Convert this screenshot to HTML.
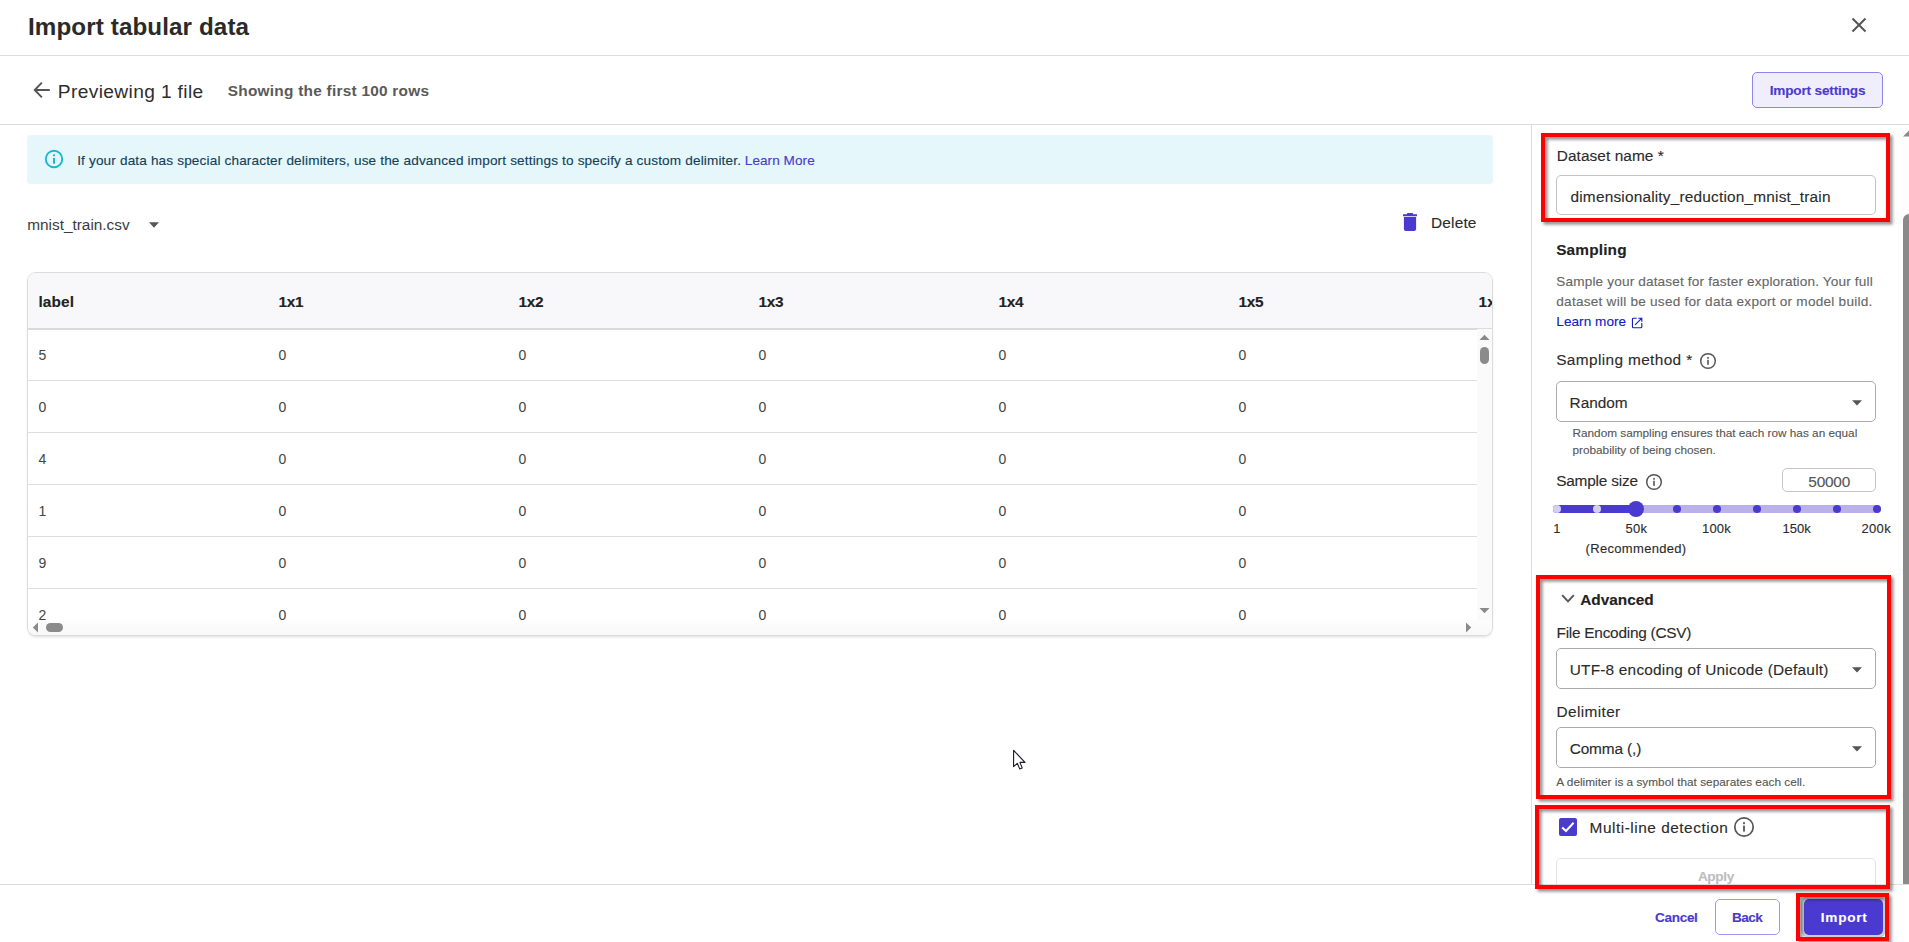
<!DOCTYPE html>
<html lang="en"><head><meta charset="utf-8"><title>Import tabular data</title>
<style>
html,body{margin:0;padding:0;background:#fff;}
body{width:1909px;height:942px;overflow:hidden;font-family:"Liberation Sans",sans-serif;}
#root{position:relative;width:1909px;height:942px;overflow:hidden;background:#fff;}
#root div,#root svg,#root span{position:absolute;box-sizing:border-box;}
.t{white-space:nowrap;line-height:20px;-webkit-text-stroke:0.12px;}
.hl{left:0;width:1909px;height:1px;background:#dcdcdc;}
.red{border:4px solid #ff0000;}
.sh{border:4px solid rgba(0,0,0,.45);filter:blur(1.5px);}
.inp{border:1px solid #c4c4c4;border-radius:5px;background:#fff;}
.sel{border-color:#ababab;}
.dot{width:8px;height:8px;border-radius:50%;background:#4a3acf;top:505px;}
.rl{left:28px;width:1449px;height:1px;background:#dedede;}

</style></head>
<body>
<div id="root">
<!-- header lines -->
<div class="hl" style="top:55px"></div>
<div class="hl" style="top:124px"></div>
<div class="hl" style="top:884px"></div>
<!-- close X -->
<svg style="left:1851px;top:17px" width="16" height="16" viewBox="0 0 16 16"><path d="M1.5 1.5 L14.5 14.5 M14.5 1.5 L1.5 14.5" stroke="#555" stroke-width="2" fill="none"/></svg>
<!-- back arrow -->
<svg style="left:33px;top:81px" width="18" height="18" viewBox="0 0 18 18"><path d="M16.8 9 H2 M8.9 1.7 L1.7 9 L8.9 16.3" stroke="#555" stroke-width="1.9" fill="none"/></svg>
<!-- Import settings button -->
<div style="left:1752px;top:72px;width:131px;height:36px;border:1px solid #8f84ea;border-radius:5px;background:#f0eefc"></div>
<!-- banner -->
<div style="left:27px;top:135px;width:1466px;height:49px;background:#e5f7fb;border-radius:4px"></div>
<svg style="left:44px;top:149px" width="20" height="20" viewBox="0 0 20 20"><circle cx="10" cy="10" r="8.2" stroke="#1ab8d3" stroke-width="1.9" fill="none"/><rect x="9" y="9" width="2" height="5.7" fill="#1ab8d3"/><rect x="9" y="5.4" width="2" height="1.8" fill="#1ab8d3"/></svg>
<!-- file dropdown caret -->
<svg style="left:149px;top:222px" width="10" height="6" viewBox="0 0 10 6"><path d="M0 0.3 H10 L5 5.8 Z" fill="#555"/></svg>
<!-- trash -->
<svg style="left:1403px;top:213px" width="14" height="18" viewBox="0 0 14 18"><path d="M0 1.2 H3.8 L4.4 0 H9.6 L10.2 1.2 H14 V3.2 H0 Z M0.9 4.1 H13.1 V16 Q13.1 18 11.1 18 H2.9 Q0.9 18 0.9 16 Z" fill="#4a3acf"/></svg>
<!-- table -->
<div style="left:27px;top:272px;width:1466px;height:364px;border:1px solid #dcdcdc;border-radius:9px;background:#fff;overflow:hidden;box-shadow:0 2px 3px -1px rgba(0,0,0,.14)">
  <div style="left:0;top:0;width:1466px;height:55px;background:#f8f8fa"></div>
  <div style="left:0;top:55px;width:1450px;height:2px;background:#d8dadd"></div>
  <div style="left:1450px;top:55px;width:16px;height:1px;background:#dcdcdc"></div>
  <div style="left:1449px;top:56px;width:16px;height:292px;background:#fafafa"></div>
  <div style="left:0;top:347px;width:1466px;height:16px;background:linear-gradient(#fdfdfd,#f8f8f8)"></div>
  <span class="t" style="left:1450.6px;top:20px;line-height:17px;font-size:15.4px;font-weight:700;color:#222">1x6</span>
</div>
<div class="rl" style="top:380px"></div>
<div class="rl" style="top:432px"></div>
<div class="rl" style="top:484px"></div>
<div class="rl" style="top:536px"></div>
<div class="rl" style="top:588px"></div>
<!-- mask bottom of last row text under h-scrollbar -->
<div style="left:28px;top:620px;width:1464px;height:15px;background:linear-gradient(#fdfdfd,#f8f8f8);border-radius:0 0 8px 8px"></div>
<!-- scrollbars of table -->
<svg style="left:1479px;top:334px" width="11" height="7" viewBox="0 0 11 7"><path d="M0.5 6 L5.5 0.8 L10.5 6 Z" fill="#8a8a8a"/></svg>
<div style="left:1480px;top:347px;width:9px;height:17px;border-radius:4.5px;background:#8b8b8b"></div>
<svg style="left:1479px;top:607px" width="11" height="7" viewBox="0 0 11 7"><path d="M0.5 1 L5.5 6.2 L10.5 1 Z" fill="#8a8a8a"/></svg>
<svg style="left:1465px;top:622px" width="7" height="11" viewBox="0 0 7 11"><path d="M1 0.5 L6.2 5.5 L1 10.5 Z" fill="#8a8a8a"/></svg>
<svg style="left:32px;top:622px" width="7" height="11" viewBox="0 0 7 11"><path d="M6 0.5 L0.8 5.5 L6 10.5 Z" fill="#8a8a8a"/></svg>
<div style="left:46px;top:623px;width:17px;height:9px;border-radius:4.5px;background:#8b8b8b"></div>
<!-- panel divider -->
<div style="left:1531px;top:125px;width:1px;height:759px;background:#dcdcdc"></div>
<!-- panel scrollbar -->
<div style="left:1903px;top:125px;width:6px;height:759px;background:#fdfdfd"></div>
<svg style="left:1903px;top:130px" width="6" height="7" viewBox="0 0 6 7"><path d="M0 6.5 L6 0.5 V6.5 Z" fill="#8a8a8a"/></svg>
<div style="left:1903px;top:214px;width:12px;height:670px;border-radius:6px 6px 0 0;background:#8a8a8a"></div>
<!-- inputs -->
<div class="inp" style="left:1556px;top:175px;width:320px;height:40px"></div>
<div class="inp sel" style="left:1556px;top:381px;width:320px;height:41px"></div>
<div class="inp" style="left:1782px;top:468px;width:94px;height:24px"></div>
<div class="inp sel" style="left:1556px;top:648px;width:320px;height:41px"></div>
<div class="inp sel" style="left:1556px;top:727px;width:320px;height:41px"></div>
<!-- Apply button (clipped by footer) -->
<div style="left:1556px;top:858px;width:320px;height:26px;overflow:hidden"><div style="left:0;top:0;width:320px;height:40px;border:1px solid #e2e2e2;border-radius:5px;background:#fff"></div></div>
<!-- select carets -->
<svg style="left:1852px;top:400px" width="10" height="6" viewBox="0 0 10 6"><path d="M0 0.2 H10 L5 5.6 Z" fill="#555"/></svg>
<svg style="left:1852px;top:667px" width="10" height="6" viewBox="0 0 10 6"><path d="M0 0.2 H10 L5 5.6 Z" fill="#555"/></svg>
<svg style="left:1852px;top:746px" width="10" height="6" viewBox="0 0 10 6"><path d="M0 0.2 H10 L5 5.6 Z" fill="#555"/></svg>
<!-- external link icon -->
<svg style="left:1631px;top:317px" width="12" height="12" viewBox="0 0 12 12"><path d="M5.7 1.25 H2.45 Q1.45 1.25 1.45 2.25 V9.75 Q1.45 10.75 2.45 10.75 H9.8 Q10.8 10.75 10.8 9.75 V6 M7.3 1.25 H10.8 V4.7 M4.1 7.8 L10.3 1.7" stroke="#1020c4" stroke-width="1.15" fill="none"/></svg>
<!-- info icons -->
<svg style="left:1699px;top:352px" width="18" height="18" viewBox="0 0 18 18"><circle cx="9" cy="9" r="7.3" stroke="#555" stroke-width="1.5" fill="none"/><rect x="8.2" y="7.8" width="1.6" height="5" fill="#555"/><rect x="8.2" y="5" width="1.6" height="1.7" fill="#555"/></svg>
<svg style="left:1645px;top:473px" width="18" height="18" viewBox="0 0 18 18"><circle cx="9" cy="9" r="7.3" stroke="#555" stroke-width="1.5" fill="none"/><rect x="8.2" y="7.8" width="1.6" height="5" fill="#555"/><rect x="8.2" y="5" width="1.6" height="1.7" fill="#555"/></svg>
<svg style="left:1733px;top:816px" width="22" height="22" viewBox="0 0 22 22"><circle cx="11" cy="11" r="9.2" stroke="#555" stroke-width="1.7" fill="none"/><rect x="10.1" y="9.6" width="1.8" height="6" fill="#555"/><rect x="10.1" y="6.2" width="1.8" height="2" fill="#555"/></svg>
<!-- slider -->
<div style="left:1553px;top:505px;width:328px;height:8px;border-radius:4px;background:#bbb1ea"></div>
<div style="left:1553px;top:505px;width:84px;height:8px;border-radius:4px 0 0 4px;background:#4a3acf"></div>
<div class="dot" style="left:1553px;background:#d5d0f3"></div>
<div class="dot" style="left:1593px;background:#d5d0f3"></div>
<div class="dot" style="left:1673px"></div>
<div class="dot" style="left:1713px"></div>
<div class="dot" style="left:1753px"></div>
<div class="dot" style="left:1793px"></div>
<div class="dot" style="left:1833px"></div>
<div class="dot" style="left:1873px"></div>
<div style="left:1628px;top:501px;width:16px;height:16px;border-radius:50%;background:#4a3acf"></div>
<!-- advanced chevron -->
<svg style="left:1561px;top:594px" width="14" height="9" viewBox="0 0 14 9"><path d="M1.2 1.2 L7 7.4 L12.8 1.2" stroke="#555" stroke-width="1.9" fill="none"/></svg>
<!-- checkbox -->
<div style="left:1559px;top:818px;width:18px;height:18px;border-radius:2px;background:#4a3acf"></div>
<svg style="left:1559px;top:818px" width="18" height="18" viewBox="0 0 18 18"><path d="M3.2 9.4 L7 13 L14.6 4.8" stroke="#fff" stroke-width="2" fill="none"/></svg>
<!-- footer buttons -->
<div style="left:1715px;top:899px;width:65px;height:36px;border:1px solid #a299ee;border-radius:5px;background:#fff"></div>
<div style="left:1804px;top:899px;width:79px;height:36px;border-radius:5px;background:#4a3acf;box-shadow:0 0 0 3px #cfcfcf"></div>
<!-- red annotation boxes -->
<svg style="left:0;top:0" width="1909" height="942" viewBox="0 0 1909 942"><defs><filter id="bl" x="-5%" y="-5%" width="110%" height="110%"><feGaussianBlur stdDeviation="1.5"/></filter></defs><g filter="url(#bl)" fill="none" stroke="#000" stroke-opacity="0.45" stroke-width="4"><rect x="1545.5" y="137.5" width="345" height="85"/><rect x="1540.5" y="579.5" width="351" height="220"/><rect x="1539.5" y="809.5" width="351" height="80"/><rect x="1800.5" y="897.5" width="89" height="44"/></g></svg>
<div class="red" style="left:1541px;top:133px;width:349px;height:89px"></div>
<div class="red" style="left:1536px;top:575px;width:355px;height:224px"></div>
<div class="red" style="left:1535px;top:805px;width:355px;height:84px"></div>
<div class="red" style="left:1796px;top:893px;width:93px;height:48px"></div>
<!-- mouse cursor -->
<svg style="left:1012px;top:749px" width="15" height="22" viewBox="0 0 15 22"><path d="M1.6 1.3 V17.6 L5.3 14.3 L7.7 19.9 L10.2 18.9 L7.9 13.4 H13 Z" fill="#fff" stroke="#1a1a2a" stroke-width="1.1" stroke-linejoin="round"/></svg>

<span class="t" style="left:28.0px;top:13px;line-height:27px;font-size:24.2px;color:#2a2a2a;font-weight:700;letter-spacing:0.108px;-webkit-text-stroke:0;">Import tabular data</span>
<span class="t" style="left:57.8px;top:81px;line-height:21px;font-size:19.2px;color:#2e2e2e;letter-spacing:0.355px;-webkit-text-stroke:0;">Previewing 1 file</span>
<span class="t" style="left:227.8px;top:82px;line-height:17px;font-size:15.4px;color:#5a5a5a;font-weight:700;letter-spacing:0.249px;-webkit-text-stroke:0;">Showing the first 100 rows</span>
<span class="t" style="left:1769.7px;top:83px;line-height:15px;font-size:13.6px;color:#4a3acf;font-weight:700;letter-spacing:-0.171px;">Import settings</span>
<span class="t" style="left:77.2px;top:153px;line-height:15px;font-size:13.6px;color:#12405a;letter-spacing:0.149px;">If your data has special character delimiters, use the advanced import settings to specify a custom delimiter.</span>
<span class="t" style="left:744.8px;top:153px;line-height:15px;font-size:13.6px;color:#4a3acf;letter-spacing:0.043px;">Learn More</span>
<span class="t" style="left:27.2px;top:216px;line-height:17px;font-size:15.4px;color:#3c3c3c;letter-spacing:-0.010px;-webkit-text-stroke:0;">mnist_train.csv</span>
<span class="t" style="left:1431.1px;top:214px;line-height:17px;font-size:15.4px;color:#2b2b2b;letter-spacing:0.160px;">Delete</span>
<span class="t" style="left:38.4px;top:293px;line-height:17px;font-size:15.4px;color:#222;font-weight:700;letter-spacing:0.130px;">label</span>
<span class="t" style="left:278.6px;top:293px;line-height:17px;font-size:15.4px;color:#222;font-weight:700;letter-spacing:-0.294px;">1x1</span>
<span class="t" style="left:518.6px;top:293px;line-height:17px;font-size:15.4px;color:#222;font-weight:700;letter-spacing:-0.294px;">1x2</span>
<span class="t" style="left:758.6px;top:293px;line-height:17px;font-size:15.4px;color:#222;font-weight:700;letter-spacing:-0.294px;">1x3</span>
<span class="t" style="left:998.6px;top:293px;line-height:17px;font-size:15.4px;color:#222;font-weight:700;letter-spacing:-0.294px;">1x4</span>
<span class="t" style="left:1238.6px;top:293px;line-height:17px;font-size:15.4px;color:#222;font-weight:700;letter-spacing:-0.294px;">1x5</span>
<span class="t" style="left:38.4px;top:347px;line-height:16px;font-size:14.0px;color:#444;-webkit-text-stroke:0;">5</span>
<span class="t" style="left:278.6px;top:347px;line-height:16px;font-size:14.0px;color:#444;-webkit-text-stroke:0;">0</span>
<span class="t" style="left:518.6px;top:347px;line-height:16px;font-size:14.0px;color:#444;-webkit-text-stroke:0;">0</span>
<span class="t" style="left:758.6px;top:347px;line-height:16px;font-size:14.0px;color:#444;-webkit-text-stroke:0;">0</span>
<span class="t" style="left:998.6px;top:347px;line-height:16px;font-size:14.0px;color:#444;-webkit-text-stroke:0;">0</span>
<span class="t" style="left:1238.6px;top:347px;line-height:16px;font-size:14.0px;color:#444;-webkit-text-stroke:0;">0</span>
<span class="t" style="left:38.4px;top:399px;line-height:16px;font-size:14.0px;color:#444;-webkit-text-stroke:0;">0</span>
<span class="t" style="left:278.6px;top:399px;line-height:16px;font-size:14.0px;color:#444;-webkit-text-stroke:0;">0</span>
<span class="t" style="left:518.6px;top:399px;line-height:16px;font-size:14.0px;color:#444;-webkit-text-stroke:0;">0</span>
<span class="t" style="left:758.6px;top:399px;line-height:16px;font-size:14.0px;color:#444;-webkit-text-stroke:0;">0</span>
<span class="t" style="left:998.6px;top:399px;line-height:16px;font-size:14.0px;color:#444;-webkit-text-stroke:0;">0</span>
<span class="t" style="left:1238.6px;top:399px;line-height:16px;font-size:14.0px;color:#444;-webkit-text-stroke:0;">0</span>
<span class="t" style="left:38.4px;top:451px;line-height:16px;font-size:14.0px;color:#444;-webkit-text-stroke:0;">4</span>
<span class="t" style="left:278.6px;top:451px;line-height:16px;font-size:14.0px;color:#444;-webkit-text-stroke:0;">0</span>
<span class="t" style="left:518.6px;top:451px;line-height:16px;font-size:14.0px;color:#444;-webkit-text-stroke:0;">0</span>
<span class="t" style="left:758.6px;top:451px;line-height:16px;font-size:14.0px;color:#444;-webkit-text-stroke:0;">0</span>
<span class="t" style="left:998.6px;top:451px;line-height:16px;font-size:14.0px;color:#444;-webkit-text-stroke:0;">0</span>
<span class="t" style="left:1238.6px;top:451px;line-height:16px;font-size:14.0px;color:#444;-webkit-text-stroke:0;">0</span>
<span class="t" style="left:38.4px;top:503px;line-height:16px;font-size:14.0px;color:#444;-webkit-text-stroke:0;">1</span>
<span class="t" style="left:278.6px;top:503px;line-height:16px;font-size:14.0px;color:#444;-webkit-text-stroke:0;">0</span>
<span class="t" style="left:518.6px;top:503px;line-height:16px;font-size:14.0px;color:#444;-webkit-text-stroke:0;">0</span>
<span class="t" style="left:758.6px;top:503px;line-height:16px;font-size:14.0px;color:#444;-webkit-text-stroke:0;">0</span>
<span class="t" style="left:998.6px;top:503px;line-height:16px;font-size:14.0px;color:#444;-webkit-text-stroke:0;">0</span>
<span class="t" style="left:1238.6px;top:503px;line-height:16px;font-size:14.0px;color:#444;-webkit-text-stroke:0;">0</span>
<span class="t" style="left:38.4px;top:555px;line-height:16px;font-size:14.0px;color:#444;-webkit-text-stroke:0;">9</span>
<span class="t" style="left:278.6px;top:555px;line-height:16px;font-size:14.0px;color:#444;-webkit-text-stroke:0;">0</span>
<span class="t" style="left:518.6px;top:555px;line-height:16px;font-size:14.0px;color:#444;-webkit-text-stroke:0;">0</span>
<span class="t" style="left:758.6px;top:555px;line-height:16px;font-size:14.0px;color:#444;-webkit-text-stroke:0;">0</span>
<span class="t" style="left:998.6px;top:555px;line-height:16px;font-size:14.0px;color:#444;-webkit-text-stroke:0;">0</span>
<span class="t" style="left:1238.6px;top:555px;line-height:16px;font-size:14.0px;color:#444;-webkit-text-stroke:0;">0</span>
<span class="t" style="left:38.4px;top:607px;line-height:16px;font-size:14.0px;color:#444;-webkit-text-stroke:0;">2</span>
<span class="t" style="left:278.6px;top:607px;line-height:16px;font-size:14.0px;color:#444;-webkit-text-stroke:0;">0</span>
<span class="t" style="left:518.6px;top:607px;line-height:16px;font-size:14.0px;color:#444;-webkit-text-stroke:0;">0</span>
<span class="t" style="left:758.6px;top:607px;line-height:16px;font-size:14.0px;color:#444;-webkit-text-stroke:0;">0</span>
<span class="t" style="left:998.6px;top:607px;line-height:16px;font-size:14.0px;color:#444;-webkit-text-stroke:0;">0</span>
<span class="t" style="left:1238.6px;top:607px;line-height:16px;font-size:14.0px;color:#444;-webkit-text-stroke:0;">0</span>
<span class="t" style="left:1556.8px;top:147px;line-height:17px;font-size:15.4px;color:#2b2b2b;letter-spacing:0.070px;">Dataset name *</span>
<span class="t" style="left:1570.5px;top:188px;line-height:17px;font-size:15.4px;color:#2b2b2b;letter-spacing:0.193px;">dimensionality_reduction_mnist_train</span>
<span class="t" style="left:1556.2px;top:241px;line-height:17px;font-size:15.4px;color:#222;font-weight:700;letter-spacing:0.162px;">Sampling</span>
<span class="t" style="left:1556.3px;top:274px;line-height:15px;font-size:13.6px;color:#666;letter-spacing:0.156px;">Sample your dataset for faster exploration. Your full</span>
<span class="t" style="left:1556.3px;top:294px;line-height:15px;font-size:13.6px;color:#666;letter-spacing:0.240px;">dataset will be used for data export or model build.</span>
<span class="t" style="left:1556.3px;top:314px;line-height:15px;font-size:13.6px;color:#1020c4;letter-spacing:0.032px;">Learn more</span>
<span class="t" style="left:1556.2px;top:351px;line-height:17px;font-size:15.4px;color:#2b2b2b;letter-spacing:0.372px;">Sampling method *</span>
<span class="t" style="left:1569.6px;top:394px;line-height:17px;font-size:15.4px;color:#2b2b2b;letter-spacing:-0.037px;">Random</span>
<span class="t" style="left:1572.5px;top:426px;line-height:14px;font-size:11.8px;color:#555;letter-spacing:-0.010px;">Random sampling ensures that each row has an equal</span>
<span class="t" style="left:1572.5px;top:443px;line-height:14px;font-size:11.8px;color:#555;letter-spacing:-0.010px;">probability of being chosen.</span>
<span class="t" style="left:1556.2px;top:472px;line-height:17px;font-size:15.4px;color:#2b2b2b;letter-spacing:-0.194px;">Sample size</span>
<span class="t" style="left:1808.3px;top:473px;line-height:17px;font-size:15.4px;color:#555;letter-spacing:-0.203px;">50000</span>
<span class="t" style="left:1553.2px;top:521px;line-height:15px;font-size:13.0px;color:#2b2b2b;">1</span>
<span class="t" style="left:1625.6px;top:521px;line-height:15px;font-size:13.0px;color:#2b2b2b;letter-spacing:0.216px;">50k</span>
<span class="t" style="left:1702.0px;top:521px;line-height:15px;font-size:13.0px;color:#2b2b2b;letter-spacing:0.166px;">100k</span>
<span class="t" style="left:1782.5px;top:521px;line-height:15px;font-size:13.0px;color:#2b2b2b;letter-spacing:0.032px;">150k</span>
<span class="t" style="left:1861.5px;top:521px;line-height:15px;font-size:13.0px;color:#2b2b2b;letter-spacing:0.332px;">200k</span>
<span class="t" style="left:1585.6px;top:541px;line-height:15px;font-size:13.0px;color:#2b2b2b;letter-spacing:0.314px;">(Recommended)</span>
<span class="t" style="left:1580.3px;top:591px;line-height:17px;font-size:15.4px;color:#222;font-weight:700;letter-spacing:-0.038px;">Advanced</span>
<span class="t" style="left:1556.5px;top:624px;line-height:17px;font-size:15.4px;color:#2b2b2b;letter-spacing:-0.247px;">File Encoding (CSV)</span>
<span class="t" style="left:1569.7px;top:661px;line-height:17px;font-size:15.4px;color:#2b2b2b;letter-spacing:0.212px;">UTF-8 encoding of Unicode (Default)</span>
<span class="t" style="left:1556.5px;top:703px;line-height:17px;font-size:15.4px;color:#2b2b2b;letter-spacing:0.373px;">Delimiter</span>
<span class="t" style="left:1569.7px;top:740px;line-height:17px;font-size:15.4px;color:#2b2b2b;letter-spacing:-0.123px;">Comma (,)</span>
<span class="t" style="left:1556.3px;top:775px;line-height:14px;font-size:11.8px;color:#555;letter-spacing:0.010px;">A delimiter is a symbol that separates each cell.</span>
<span class="t" style="left:1589.6px;top:819px;line-height:17px;font-size:15.4px;color:#2b2b2b;letter-spacing:0.520px;">Multi-line detection</span>
<span class="t" style="left:1697.9px;top:869px;line-height:15px;font-size:13.6px;color:#bdbdbd;font-weight:700;letter-spacing:-0.366px;">Apply</span>
<span class="t" style="left:1655.0px;top:910px;line-height:15px;font-size:13.6px;color:#4a3acf;font-weight:700;letter-spacing:-0.336px;">Cancel</span>
<span class="t" style="left:1732.1px;top:910px;line-height:15px;font-size:13.6px;color:#4a3acf;font-weight:700;letter-spacing:-0.567px;">Back</span>
<span class="t" style="left:1820.8px;top:910px;line-height:15px;font-size:13.6px;color:#fff;font-weight:700;letter-spacing:0.761px;">Import</span>
</div>
</body></html>
